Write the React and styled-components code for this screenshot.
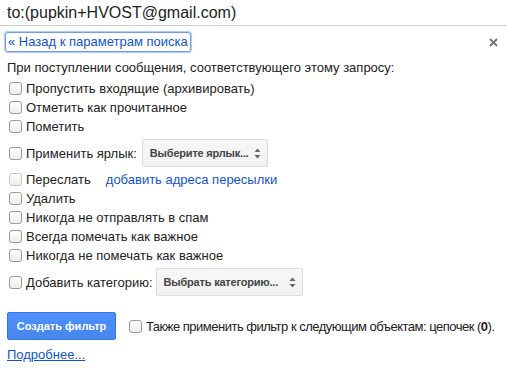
import React from "react";
import styled, { createGlobalStyle, css } from "styled-components";

const Global = createGlobalStyle`
  html, body { margin: 0; padding: 0; background: #fff; }
  body { font-family: "Liberation Sans", Arial, sans-serif; color: #222; }
`;

const Page = styled.div`
  width: 507px;
  height: 370px;
  overflow: hidden;
  font-size: 13px;
`;

const Header = styled.div`
  height: 25px;
  line-height: 25px;
  padding-left: 7px;
  font-size: 16px;
  color: #222;
  border-bottom: 1px solid #cfcfcf;
  white-space: nowrap;
`;

const BackRow = styled.div`
  display: flex;
  align-items: center;
  justify-content: space-between;
  padding: 6px 9px 0 5px;
  height: 20px;
`;

const BackLink = styled.a`
  display: inline-block;
  height: 18px;
  line-height: 18px;
  padding: 0 2px;
  color: #15c;
  text-decoration: none;
  border-radius: 3px;
  border: 1px solid #6f9fe0;
  box-shadow: 0 0 1px 1px #a9c8f2;
  cursor: pointer;
`;

const Close = styled.span`
  display: flex;
  width: 9px;
  height: 9px;
`;

const Body = styled.div`
  padding: 6px 0 0 7px;
`;

const Intro = styled.div`
  height: 19px;
  line-height: 19px;
  margin-bottom: 2px;
`;

const Row = styled.div`
  display: flex;
  align-items: center;
  height: 19px;
  white-space: nowrap;
  ${(p) =>
    p.$withSelect &&
    css`
      height: 28px;
      margin: 3px 0 3px;
    `}
`;

const Box = styled.span`
  box-sizing: border-box;
  width: 13px;
  height: 13px;
  margin: 0 4px 0 2px;
  border-radius: 3px;
  border: 1px solid ${(p) => (p.$disabled ? "#c8c8c8" : "#9a9a9a")};
  background: linear-gradient(#ffffff, #ededed);
  box-shadow: inset 0 1px 0 #fff;
  flex: none;
`;

const Label = styled.span`
  color: #222;
  white-space: nowrap;
  ${(p) =>
    p.$tight &&
    css`
      letter-spacing: -0.5px;
    `}
`;

const Link = styled.a`
  color: #15c;
  text-decoration: none;
  margin-left: ${(p) => p.$gap || 0}px;
  cursor: pointer;
`;

const Select = styled.div`
  box-sizing: border-box;
  display: flex;
  align-items: center;
  justify-content: space-between;
  width: ${(p) => p.$w}px;
  height: 28px;
  margin-left: ${(p) => p.$ml}px;
  padding: 0 6px 0 7px;
  border: 1px solid #dcdcdc;
  border-radius: 2px;
  background: linear-gradient(#f7f7f7, #f1f1f1);
  font-size: 11px;
  font-weight: bold;
  letter-spacing: -0.2px;
  color: #444;
`;

const Footer = styled.div`
  display: flex;
  align-items: center;
  margin-top: 16px;
`;

const Button = styled.button`
  box-sizing: border-box;
  width: 109px;
  height: 28px;
  padding: 0;
  border: 1px solid #3079ed;
  border-radius: 2px;
  background: linear-gradient(#4d90fe, #4787ed);
  color: #fff;
  font-family: "Liberation Sans", Arial, sans-serif;
  font-size: 11px;
  font-weight: bold;
  margin-right: 11px;
  flex: none;
`;

const More = styled.a`
  display: inline-block;
  margin-top: 7px;
  color: #15c;
  text-decoration: underline;
  line-height: 16px;
`;

const Arrows = () => (
  <svg width="7" height="11" viewBox="0 0 7 11">
    <path d="M3.5 0.5 L6.5 4 L0.5 4 Z" fill="#666" />
    <path d="M3.5 10.5 L6.5 7 L0.5 7 Z" fill="#666" />
  </svg>
);

const CheckRow = ({ children, disabled }) => (
  <Row>
    <Box $disabled={disabled} />
    <Label>{children}</Label>
  </Row>
);

export default function App() {
  return (
    <Page>
      <Global />
      <Header>to:(pupkin+HVOST@gmail.com)</Header>
      <BackRow>
        <BackLink>« Назад к параметрам поиска</BackLink>
        <Close>
          <svg width="9" height="9" viewBox="0 0 9 9">
            <path d="M1 1 L8 8 M8 1 L1 8" stroke="#777" strokeWidth="2" />
          </svg>
        </Close>
      </BackRow>
      <Body>
        <Intro>При поступлении сообщения, соответствующего этому запросу:</Intro>
        <CheckRow>Пропустить входящие (архивировать)</CheckRow>
        <CheckRow>Отметить как прочитанное</CheckRow>
        <CheckRow>Пометить</CheckRow>
        <Row $withSelect>
          <Box />
          <Label>Применить ярлык:</Label>
          <Select $w={126} $ml={5}>
            <span>Выберите ярлык...</span>
            <Arrows />
          </Select>
        </Row>
        <Row>
          <Box $disabled />
          <Label>Переслать</Label>
          <Link $gap={15}>добавить адреса пересылки</Link>
        </Row>
        <CheckRow>Удалить</CheckRow>
        <CheckRow>Никогда не отправлять в спам</CheckRow>
        <CheckRow>Всегда помечать как важное</CheckRow>
        <CheckRow>Никогда не помечать как важное</CheckRow>
        <Row $withSelect>
          <Box />
          <Label>Добавить категорию:</Label>
          <Select $w={147} $ml={3}>
            <span>Выбрать категорию...</span>
            <Arrows />
          </Select>
        </Row>
        <Footer>
          <Button>Создать фильтр</Button>
          <Box />
          <Label $tight>
            Также применить фильтр к следующим объектам: цепочек (<b>0</b>).
          </Label>
        </Footer>
        <More>Подробнее...</More>
      </Body>
    </Page>
  );
}
